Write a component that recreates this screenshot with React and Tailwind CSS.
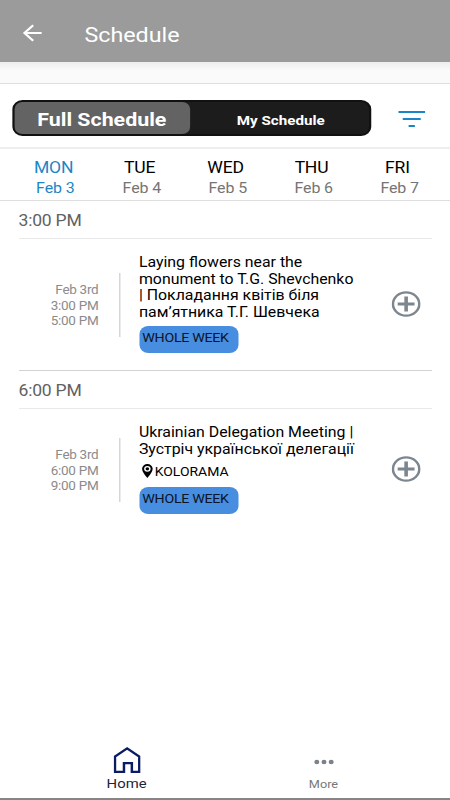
import React, { useState } from "react";

const days = [
  { name: "MON", date: "Feb 3" },
  { name: "TUE", date: "Feb 4" },
  { name: "WED", date: "Feb 5" },
  { name: "THU", date: "Feb 6" },
  { name: "FRI", date: "Feb 7" },
];

const BackIcon = () => (
  <svg width="18" height="18" viewBox="0 0 18 18" fill="none">
    <path d="M17 9H2M9.5 1.2 1.7 9l7.8 7.8" stroke="white" strokeWidth="2" />
  </svg>
);

const FilterIcon = () => (
  <svg width="24" height="16" viewBox="0 0 24 16" fill="none">
    <path d="M0 1h24M4 8h16M9.2 15h5.6" stroke="#1a86c7" strokeWidth="1.8" />
  </svg>
);

const PlusIcon = () => (
  <svg width="26" height="26" viewBox="0 0 26 26" fill="none">
    <circle cx="13" cy="13" r="11.7" stroke="#7c868f" strokeWidth="2.2" />
    <path d="M13 5.5v15M5.5 13h15" stroke="#7c868f" strokeWidth="3.2" />
  </svg>
);

const PinIcon = () => (
  <svg width="10" height="14" viewBox="0 0 10 14" className="-mt-[3px]">
    <path
      fillRule="evenodd"
      fill="black"
      d="M5 0a4.7 4.7 0 0 0-4.7 4.7C.3 8.2 5 14 5 14s4.7-5.8 4.7-9.3A4.7 4.7 0 0 0 5 0Zm0 1.9a2.9 2.9 0 1 1 0 5.8 2.9 2.9 0 0 1 0-5.8Z"
    />
    <circle cx="5" cy="4.8" r="1.6" fill="black" />
  </svg>
);

const HomeIcon = () => (
  <svg width="24" height="26" viewBox="0 0 24 26" fill="none">
    <path
      d="M1.2 24.8V9.6L12 1.4l10.8 8.2v15.2h-6.6v-8.6H9.2v8.6H1.2Z"
      stroke="#0c1c64"
      strokeWidth="2.2"
    />
  </svg>
);

const MoreIcon = () => (
  <svg width="18" height="6" viewBox="0 0 18 6" fill="#7c828a">
    <circle cx="2.6" cy="3" r="2.2" />
    <circle cx="9" cy="3" r="2.2" />
    <circle cx="15.4" cy="3" r="2.2" />
  </svg>
);

const Tag = ({ children }) => (
  <div className="h-[27px] w-[88px] whitespace-nowrap rounded-[8px] bg-[#478de0] pl-[3px] pt-[3.5px] text-[12.6px] leading-4 tracking-[-0.25px] text-[#0b1424]">
    {children}
  </div>
);

const SlotTitle = ({ children }) => (
  <h2 className="h-[38px] border-b border-[#e9e9e9] pt-[10px] text-[15.6px] leading-5 tracking-[-0.2px] text-[#616161]">
    {children}
  </h2>
);

const Session = ({ times, title, place, className, sideClass, addClass }) => (
  <div className={`flex ${className}`}>
    <div
      className={`flex h-[64px] w-[90px] items-center justify-end border-r border-[#c9c9c9] pr-[18px] pt-[3px] text-right text-[12px] leading-[15.8px] tracking-[-0.25px] text-[#8b8b8b] ${sideClass}`}
    >
      <div className="whitespace-nowrap">
        {times.map((time) => (
          <div key={time}>{time}</div>
        ))}
      </div>
    </div>
    <div className="ml-[17px] w-[215px] text-[14.1px] leading-[16.5px] text-black">
      {title.map((line) => (
        <div key={line} className="whitespace-nowrap">
          {line}
        </div>
      ))}
      {place && (
        <div className="mt-[7px] flex h-[17px] items-center gap-[2px] pl-[2px] text-[12.4px]">
          <PinIcon />
          {place}
        </div>
      )}
      <div className="mt-[6px]">
        <Tag>WHOLE WEEK</Tag>
      </div>
    </div>
    <button type="button" className={`ml-[9px] h-[26px] ${addClass}`} title="Add">
      <PlusIcon />
    </button>
  </div>
);

const App = () => {
  const [activeDay, setActiveDay] = useState("MON");

  return (
    <div className="h-[800px] w-[450px] overflow-hidden bg-white">
      <div className="flex h-[800px] w-[400px] origin-top-left scale-x-[1.125] flex-col font-['Roboto','Noto_Sans',sans-serif]">
        <header className="flex h-[62px] items-center bg-[#9b9b9b] pl-[20px] pt-[4px] text-white">
          <BackIcon />
          <h1 className="ml-[37px] mt-[3px] text-[20.7px] leading-6">
            Schedule
          </h1>
        </header>
        <div className="h-[22px] border-b border-[#dedede] bg-linear-to-b from-[#eeeeee] to-[#fafafa] to-40%" />

        <div className="flex h-[65px] items-center border-b-2 border-[#eeeeee] pl-[10.5px] pt-[5px]">
          <div className="flex h-[36px] w-[319px] rounded-[9px] border-2 border-[#111111] bg-[#1c1c1c] text-white">
            <button
              type="button"
              className="w-[156px] rounded-[7px] bg-[#636363] pt-[3px] text-[19px] font-bold leading-6"
            >
              Full Schedule
            </button>
            <button
              type="button"
              className="flex-1 pl-[3px] pt-[3px] text-[13.5px] font-bold leading-5"
            >
              My Schedule
            </button>
          </div>
          <div className="ml-[24.5px] mt-[2px]">
            <FilterIcon />
          </div>
        </div>

        <nav className="flex h-[52px] border-b border-[#dedede] pl-[11.5px] pt-[6px]">
          {days.map((day) => (
            <button
              type="button"
              key={day.name}
              className="w-[76.4px] shrink-0 text-center"
              onClick={() => setActiveDay(day.name)}
            >
              <div
                className={`-ml-[4px] text-[15.6px] leading-5 tracking-[-0.2px] ${
                  activeDay === day.name ? "text-[#1c86c6]" : "text-black"
                }`}
              >
                {day.name}
              </div>
              <div
                className={`text-[14.2px] leading-5 tracking-[-0.1px] ${
                  activeDay === day.name
                    ? "-ml-px text-[#1c86c6]"
                    : "text-[#757575]"
                }`}
              >
                {day.date}
              </div>
            </button>
          ))}
        </nav>

        <main className="flex-1 px-[16.5px]">
          <SlotTitle>3:00 PM</SlotTitle>
          <Session
            className="h-[132px] border-b border-[#d2d2d2] pt-[15px]"
            sideClass="mt-[19px]"
            addClass="mt-[37px]"
            times={["Feb 3rd", "3:00 PM", "5:00 PM"]}
            title={[
              "Laying flowers near the",
              "monument to T.G. Shevchenko",
              "| Покладання квітів біля",
              "пам’ятника Т.Г. Шевчека",
            ]}
          />
          <SlotTitle>6:00 PM</SlotTitle>
          <Session
            className="pt-[15px]"
            sideClass="mt-[14px]"
            addClass="mt-[32px]"
            times={["Feb 3rd", "6:00 PM", "9:00 PM"]}
            title={["Ukrainian Delegation Meeting |", "Зустріч української делегації"]}
            place="KOLORAMA"
          />
        </main>

        <footer className="flex h-[56px] border-b-2 border-[#858585] pl-[25px]">
          <div className="flex w-[175px] flex-col items-center pt-[3px] text-[13.2px] leading-5 text-[#1b2440]">
            <HomeIcon />
            <span className="mt-px">Home</span>
          </div>
          <div className="flex w-[175px] flex-col items-center pt-[15px] text-[11.3px] leading-5 text-[#777777]">
            <MoreIcon />
            <span className="mt-[10px]">More</span>
          </div>
        </footer>
      </div>
    </div>
  );
};

export default App;
